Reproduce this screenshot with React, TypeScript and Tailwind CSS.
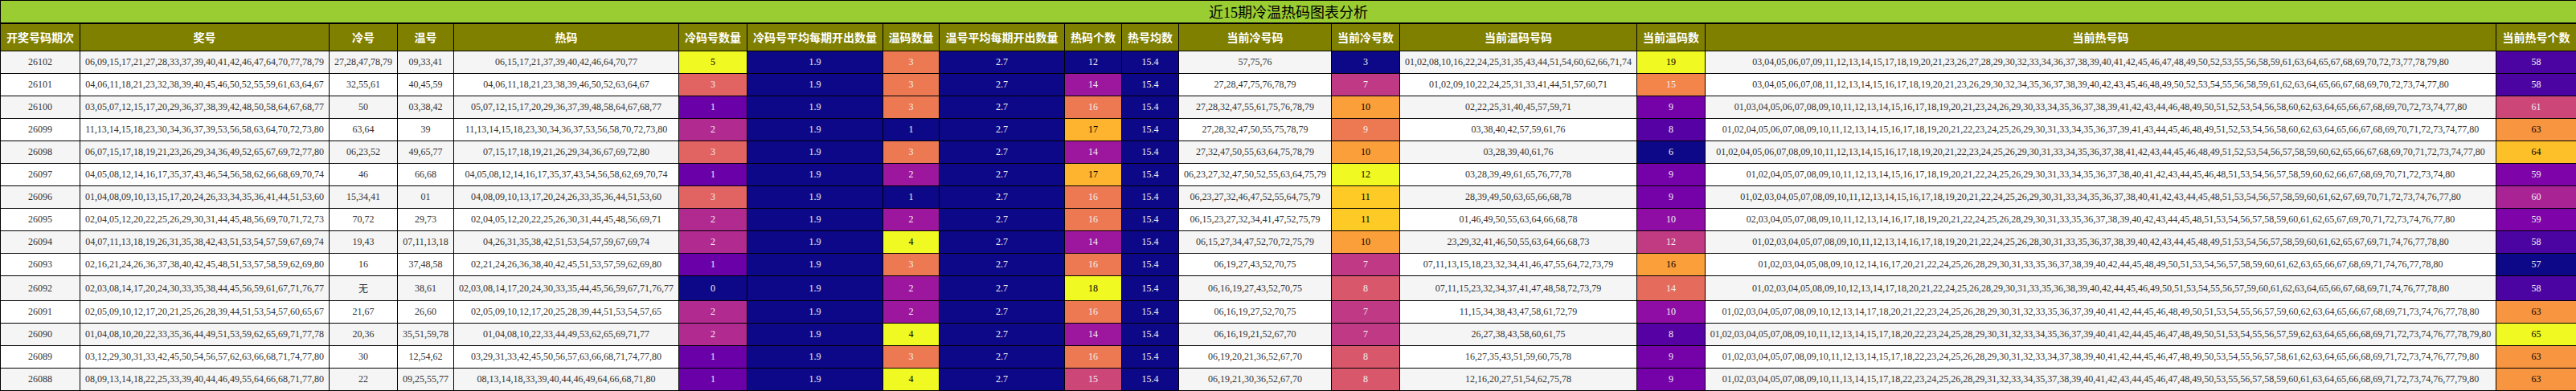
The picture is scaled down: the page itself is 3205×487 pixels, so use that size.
const font = "font-['Liberation_Serif','Noto_Sans_CJK_SC',serif]";

type Row = { issue: string; prize: string; cold: string; warm: string; nowCold: string; nowWarm: string };

const rows: Row[] = [
  { issue: "26102", prize: "06,09,15,17,21,27,28,33,37,39,40,41,42,46,47,64,70,77,78,79", cold: "27,28,47,78,79", warm: "09,33,41", nowCold: "57,75,76", nowWarm: "01,02,08,10,16,22,24,25,31,35,43,44,51,54,60,62,66,71,74" },
  { issue: "26101", prize: "04,06,11,18,21,23,32,38,39,40,45,46,50,52,55,59,61,63,64,67", cold: "32,55,61", warm: "40,45,59", nowCold: "27,28,47,75,76,78,79", nowWarm: "01,02,09,10,22,24,25,31,33,41,44,51,57,60,71" },
  { issue: "26100", prize: "03,05,07,12,15,17,20,29,36,37,38,39,42,48,50,58,64,67,68,77", cold: "50", warm: "03,38,42", nowCold: "27,28,32,47,55,61,75,76,78,79", nowWarm: "02,22,25,31,40,45,57,59,71" },
  { issue: "26099", prize: "11,13,14,15,18,23,30,34,36,37,39,53,56,58,63,64,70,72,73,80", cold: "63,64", warm: "39", nowCold: "27,28,32,47,50,55,75,78,79", nowWarm: "03,38,40,42,57,59,61,76" },
  { issue: "26098", prize: "06,07,15,17,18,19,21,23,26,29,34,36,49,52,65,67,69,72,77,80", cold: "06,23,52", warm: "49,65,77", nowCold: "27,32,47,50,55,63,64,75,78,79", nowWarm: "03,28,39,40,61,76" },
  { issue: "26097", prize: "04,05,08,12,14,16,17,35,37,43,46,54,56,58,62,66,68,69,70,74", cold: "46", warm: "66,68", nowCold: "06,23,27,32,47,50,52,55,63,64,75,79", nowWarm: "03,28,39,49,61,65,76,77,78" },
  { issue: "26096", prize: "01,04,08,09,10,13,15,17,20,24,26,33,34,35,36,41,44,51,53,60", cold: "15,34,41", warm: "01", nowCold: "06,23,27,32,46,47,52,55,64,75,79", nowWarm: "28,39,49,50,63,65,66,68,78" },
  { issue: "26095", prize: "02,04,05,12,20,22,25,26,29,30,31,44,45,48,56,69,70,71,72,73", cold: "70,72", warm: "29,73", nowCold: "06,15,23,27,32,34,41,47,52,75,79", nowWarm: "01,46,49,50,55,63,64,66,68,78" },
  { issue: "26094", prize: "04,07,11,13,18,19,26,31,35,38,42,43,51,53,54,57,59,67,69,74", cold: "19,43", warm: "07,11,13,18", nowCold: "06,15,27,34,47,52,70,72,75,79", nowWarm: "23,29,32,41,46,50,55,63,64,66,68,73" },
  { issue: "26093", prize: "02,16,21,24,26,36,37,38,40,42,45,48,51,53,57,58,59,62,69,80", cold: "16", warm: "37,48,58", nowCold: "06,19,27,43,52,70,75", nowWarm: "07,11,13,15,18,23,32,34,41,46,47,55,64,72,73,79" },
  { issue: "26092", prize: "02,03,08,14,17,20,24,30,33,35,38,44,45,56,59,61,67,71,76,77", cold: "无", warm: "38,61", nowCold: "06,16,19,27,43,52,70,75", nowWarm: "07,11,15,23,32,34,37,41,47,48,58,72,73,79" },
  { issue: "26091", prize: "02,05,09,10,12,17,20,21,25,26,28,39,44,51,53,54,57,60,65,67", cold: "21,67", warm: "26,60", nowCold: "06,16,19,27,52,70,75", nowWarm: "11,15,34,38,43,47,58,61,72,79" },
  { issue: "26090", prize: "01,04,08,10,20,22,33,35,36,44,49,51,53,59,62,65,69,71,77,78", cold: "20,36", warm: "35,51,59,78", nowCold: "06,16,19,21,52,67,70", nowWarm: "26,27,38,43,58,60,61,75" },
  { issue: "26089", prize: "03,12,29,30,31,33,42,45,50,54,56,57,62,63,66,68,71,74,77,80", cold: "30", warm: "12,54,62", nowCold: "06,19,20,21,36,52,67,70", nowWarm: "16,27,35,43,51,59,60,75,78" },
  { issue: "26088", prize: "08,09,13,14,18,22,25,33,39,40,44,46,49,55,64,66,68,71,77,80", cold: "22", warm: "09,25,55,77", nowCold: "06,19,21,30,36,52,67,70", nowWarm: "12,16,20,27,51,54,62,75,78" },
];

const headers = [
  "开奖号码期次", "奖号", "冷号", "温号", "热码", "冷码号数量", "冷码号平均每期开出数量", "温码数量",
  "温号平均每期开出数量", "热码个数", "热号均数", "当前冷号码", "当前冷号数", "当前温码号码", "当前温码数", "当前热号码", "当前热号个数",
];

const widths = [
  "w-[99px]", "w-[310px]", "w-[85px]", "w-[70px]", "w-[280px]", "w-[85px]", "w-[169px]", "w-[70px]",
  "w-[156px]", "w-[71px]", "w-[71px]", "w-[190px]", "w-[85px]", "w-[295px]", "w-[85px]", "w-[984px]", "w-[100px]",
];

const navy = "bg-[#0d0887] text-[#f1f1f1]";

// one colour per value, plasma scale of each column
const coldShade: Record<number, string> = {
  0: navy,
  1: "bg-[#6a00a8] text-[#f1f1f1]",
  2: "bg-[#b12a90] text-[#f1f1f1]",
  3: "bg-[#e16462] text-[#f1f1f1]",
  5: "bg-[#f0f921] text-black",
};
const warmShade: Record<number, string> = {
  1: navy,
  2: "bg-[#9c179e] text-[#f1f1f1]",
  3: "bg-[#ed7953] text-[#f1f1f1]",
  4: "bg-[#f0f921] text-black",
};
const hotShade: Record<number, string> = {
  12: navy,
  14: "bg-[#9c179e] text-[#f1f1f1]",
  15: "bg-[#cc4778] text-[#f1f1f1]",
  16: "bg-[#ed7953] text-[#f1f1f1]",
  17: "bg-[#feb42f] text-black",
  18: "bg-[#f0f921] text-black",
};
const nowColdShade: Record<number, string> = {
  3: navy,
  7: "bg-[#bf3984] text-[#f1f1f1]",
  8: "bg-[#d8576b] text-[#f1f1f1]",
  9: "bg-[#ed7953] text-[#f1f1f1]",
  10: "bg-[#fb9f3a] text-black",
  11: "bg-[#fdca26] text-black",
  12: "bg-[#f0f921] text-black",
};
const nowWarmShade: Record<number, string> = {
  6: navy,
  8: "bg-[#5601a4] text-[#f1f1f1]",
  9: "bg-[#7501a8] text-[#f1f1f1]",
  10: "bg-[#8f0da4] text-[#f1f1f1]",
  12: "bg-[#c13b82] text-[#f1f1f1]",
  14: "bg-[#e56b5d] text-[#f1f1f1]",
  15: "bg-[#f3854b] text-[#f1f1f1]",
  16: "bg-[#fb9f3a] text-black",
  19: "bg-[#f0f921] text-black",
};
const nowHotShade: Record<number, string> = {
  57: navy,
  58: "bg-[#4b03a1] text-[#f1f1f1]",
  59: "bg-[#7e03a8] text-[#f1f1f1]",
  60: "bg-[#aa2395] text-[#f1f1f1]",
  61: "bg-[#cc4778] text-[#f1f1f1]",
  63: "bg-[#f89540] text-black",
  64: "bg-[#fec029] text-black",
  65: "bg-[#f0f921] text-black",
};

const list = (s: string) => (s === "无" ? [] : s.split(","));
const allNumbers = Array.from({ length: 80 }, (_, i) => String(i + 1).padStart(2, "0"));

const Cell = ({ children, className = "" }: { children: React.ReactNode; className?: string }) => (
  <td className={`border border-black px-0 py-[6px] text-center whitespace-nowrap overflow-hidden ${className}`}>
    {children}
  </td>
);

export default function App() {
  return (
    <div className={`w-[3205px] bg-white ${font}`}>
      <table className="w-[3205px] table-fixed border-collapse text-[12px] leading-[normal] text-[#333]">
        <colgroup>
          {widths.map((w, i) => (
            <col key={i} className={w} />
          ))}
        </colgroup>
        <thead>
          <tr>
            <th
              colSpan={17}
              className="h-[28px] border border-b-2 border-black bg-[#9acd32] p-0 text-center text-[18px] font-normal text-black"
            >
              近15期冷温热码图表分析
            </th>
          </tr>
          <tr>
            {headers.map((h) => (
              <th
                key={h}
                className="h-[35px] border border-black bg-[#808000] px-0 py-[6px] text-center text-[14px] font-bold whitespace-nowrap text-white"
              >
                {h}
              </th>
            ))}
          </tr>
        </thead>
        <tbody>
          {rows.map((r, i) => {
            const prize = list(r.prize);
            const cold = list(r.cold);
            const warm = list(r.warm);
            const nowCold = list(r.nowCold);
            const nowWarm = list(r.nowWarm);
            const hot = prize.filter((n) => !cold.includes(n) && !warm.includes(n));
            const nowHot = allNumbers.filter((n) => !nowCold.includes(n) && !nowWarm.includes(n));
            return (
              <tr key={r.issue} className={i % 2 === 0 ? "bg-[#f5f5f5]" : "bg-white"}>
                <Cell>{r.issue}</Cell>
                <Cell>{r.prize}</Cell>
                <Cell>{r.cold}</Cell>
                <Cell>{r.warm}</Cell>
                <Cell>{hot.join(",")}</Cell>
                <Cell className={coldShade[cold.length]}>{cold.length}</Cell>
                <Cell className={navy}>1.9</Cell>
                <Cell className={warmShade[warm.length]}>{warm.length}</Cell>
                <Cell className={navy}>2.7</Cell>
                <Cell className={hotShade[hot.length]}>{hot.length}</Cell>
                <Cell className={navy}>15.4</Cell>
                <Cell>{r.nowCold}</Cell>
                <Cell className={nowColdShade[nowCold.length]}>{nowCold.length}</Cell>
                <Cell>{r.nowWarm}</Cell>
                <Cell className={nowWarmShade[nowWarm.length]}>{nowWarm.length}</Cell>
                <Cell>{nowHot.join(",")}</Cell>
                <Cell className={nowHotShade[nowHot.length]}>{nowHot.length}</Cell>
              </tr>
            );
          })}
        </tbody>
      </table>
    </div>
  );
}
